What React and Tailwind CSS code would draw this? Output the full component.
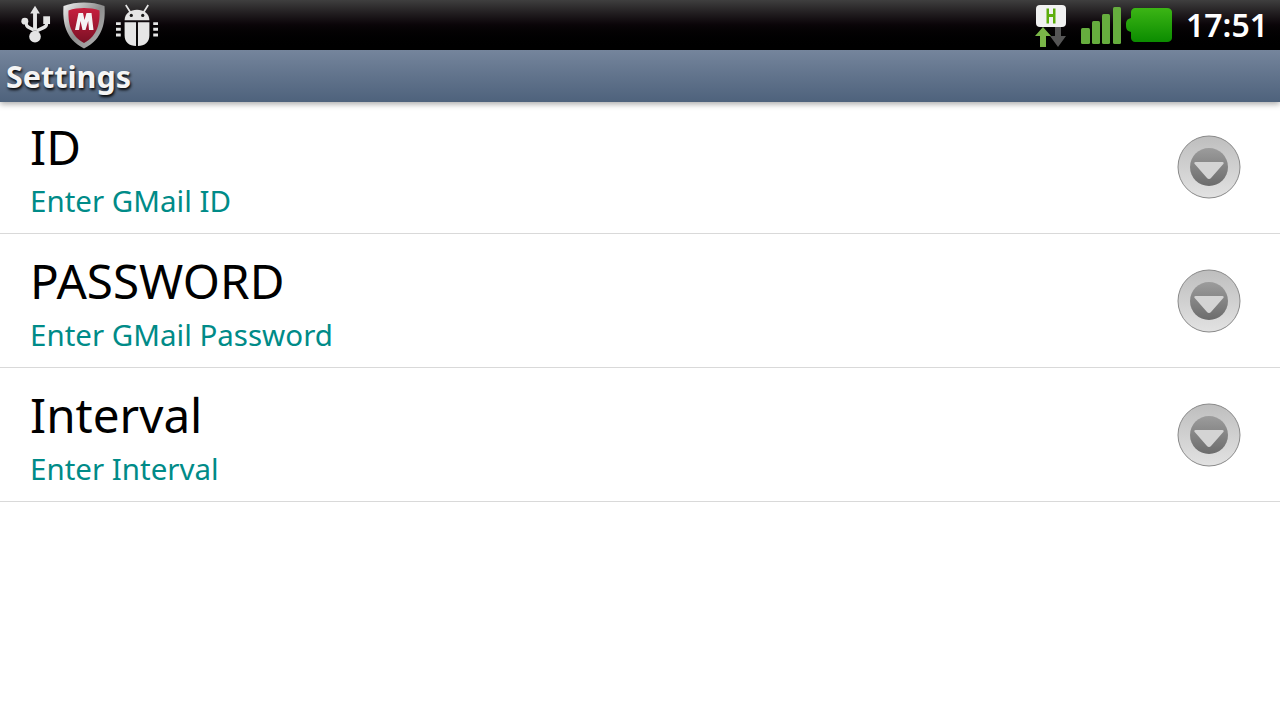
const ROWS = [
  { title: 'ID', hint: 'Enter GMail ID' },
  { title: 'PASSWORD', hint: 'Enter GMail Password' },
  { title: 'Interval', hint: 'Enter Interval' },
];

const UsbIcon = () => (
  <svg width="31" height="40" viewBox="0 0 32 40" fill="#e4e4e4">
    <path d="M15.5 0l5 8h-3v18h-4V8h-3z" />
    <circle cx="15.5" cy="32" r="6" />
    <circle cx="5" cy="16" r="3.6" />
    <rect x="24" y="11" width="7" height="8" />
    <path d="M5 16h3v2c0 2 1 2.500 3 3.500l3 1.500v4l-5-2.500C6 23 5 21.500 5 19zM26 16h3v3c0 2.500-1 4-4 5.500L17 28v-4l6.500-3c2-1 2.500-1.500 2.500-3z" />
  </svg>
);

const ShieldIcon = () => (
  <svg width="44" height="50" viewBox="0 0 44 50">
    <defs>
      <linearGradient id="rim" x1="0" y1="0" x2="1" y2="1">
        <stop offset="0" stopColor="#f2f2f2" />
        <stop offset="0.5" stopColor="#8d8d8d" />
        <stop offset="1" stopColor="#b8b8b8" />
      </linearGradient>
      <linearGradient id="red" x1="0" y1="0" x2="0" y2="1">
        <stop offset="0" stopColor="#c8213f" />
        <stop offset="1" stopColor="#7a0f24" />
      </linearGradient>
    </defs>
    <path d="M22 2.500c7 0 14 1 20.500 3.500 1 15-1 33-20.500 42.500C2.500 39 .5 21 1.500 6 8 3.500 15 2.500 22 2.500z" fill="url(#rim)" />
    <path d="M22 8c5 0 11 .7 15.500 2.500.5 12-1.500 25-15.500 32.500C8 35.500 6 22.500 6.500 10.500 11 8.700 17 8 22 8z" fill="url(#red)" />
    <path d="M13 30l3.500-17h4.500l1.500 7 2-7h5l2 17h-4.500l-.8-9-2.700 9h-3l-2-9-1.500 9z" fill="#f4f4f4" />
  </svg>
);

const BugIcon = () => (
  <svg width="42" height="44" viewBox="0 0 44 44" fill="#e6e6e6">
    <path d="M11 .5l5 8-1.500 1-5-8zM33 .5l-5 8 1.500 1 5-8z" />
    <path d="M9 17c0-7 6-11 13-11s13 4 13 11z" />
    <circle cx="16" cy="12" r="1.700" fill="#1a1a1a" />
    <circle cx="28" cy="12" r="1.700" fill="#1a1a1a" />
    <path d="M9 19h12v25c-7 0-12-4-12-11zM23 19h12v14c0 7-5 11-12 11z" />
    <path d="M0 19h5v3H0zM0 25h5v3H0zM0 31h5v3H0zM39 19h5v3h-5zM39 25h5v3h-5zM39 31h5v3h-5z" />
  </svg>
);

const DataIcon = () => (
  <svg width="34" height="48" viewBox="0 0 34 48">
    <rect x="1" y="4" width="30" height="22" rx="4" fill="#f1f1f1" />
    <path d="M11.500 7.500h2.500v5.500h4V7.500h2.500v15H18V16h-4v6.500h-2.500z" fill="#5cad0c" />
    <path d="M8 26l8 9h-5v11H5V35H0z" fill="#7ab648" />
    <path d="M20 26h6v9h5l-8 11-8-11h5z" fill="#555" />
  </svg>
);

const SignalIcon = () => (
  <svg width="40" height="37" viewBox="0 0 40 37" fill="#66ad3e">
    <rect x="0" y="21" width="9" height="16" rx="1.500" />
    <rect x="11" y="14" width="8" height="23" rx="1.500" />
    <rect x="21" y="7" width="8" height="30" rx="1.500" />
    <rect x="32" y="0" width="8" height="37" rx="1.500" />
  </svg>
);

const BatteryIcon = () => (
  <svg width="46" height="34" viewBox="0 0 46 34">
    <defs>
      <linearGradient id="batt" x1="0" y1="0" x2="0" y2="1">
        <stop offset="0" stopColor="#3cb515" />
        <stop offset="1" stopColor="#0b8c00" />
      </linearGradient>
    </defs>
    <path d="M0 17c0-4 1-6 5-7V4c0-2 2-4 4-4h32c3 0 5 2 5 4v26c0 2-2 4-5 4H9c-2 0-4-2-4-4v-6c-4-1-5-3-5-7z" fill="url(#batt)" />
  </svg>
);

const ExpandIcon = () => (
  <svg width="64" height="64" viewBox="0 0 64 64">
    <defs>
      <linearGradient id="outer" x1="0" y1="0" x2="0" y2="1">
        <stop offset="0" stopColor="#bebebe" />
        <stop offset="1" stopColor="#e2e2e2" />
      </linearGradient>
      <linearGradient id="inner" x1="0" y1="0" x2="0" y2="1">
        <stop offset="0" stopColor="#9c9c9c" />
        <stop offset="1" stopColor="#6c6c6c" />
      </linearGradient>
    </defs>
    <circle cx="32" cy="32" r="31" fill="url(#outer)" stroke="#8a8a8a" strokeWidth="1" />
    <circle cx="32" cy="32" r="19" fill="url(#inner)" />
    <path d="M18.500 27h27c1 0 1.500 1 1 1.800L34 43c-1 1.300-3 1.300-4 0L17.500 28.800c-.5-.8 0-1.800 1-1.800z" fill="#d4d4d4" />
  </svg>
);

function SettingRow({ title, hint }) {
  return (
    <div className="flex h-[134px] items-center justify-between border-b border-[#d9d9d9] pl-[30px] pr-[39.5px]">
      <div className="flex flex-col pt-[2px]">
        <div className="text-[47.6px] leading-[66px] text-black">{title}</div>
        <div className="pt-[1px] text-[29.5px] leading-[40px] text-[#008b88]">{hint}</div>
      </div>
      <ExpandIcon />
    </div>
  );
}

export default function App() {
  return (
    <div className="flex h-[720px] w-[1280px] flex-col overflow-hidden bg-white font-['Noto_Sans',sans-serif]">
      <div className="flex h-[50px] shrink-0 items-center justify-between bg-gradient-to-b from-[#3f3f3f] via-[#0a0508] via-50% to-black pl-[20px] pr-[12px]">
        <div className="flex items-center">
          <UsbIcon />
          <div className="ml-[11px]"><ShieldIcon /></div>
          <div className="ml-[10px]"><BugIcon /></div>
        </div>
        <div className="flex items-center">
          <DataIcon />
          <div className="ml-[12px]"><SignalIcon /></div>
          <div className="ml-[5px]"><BatteryIcon /></div>
          <div className="ml-[14px] text-[32px] font-semibold leading-[50px] text-white">17:51</div>
        </div>
      </div>
      <div className="relative z-10 flex h-[52px] shrink-0 items-center bg-gradient-to-b from-[#75859c] to-[#4e627c] pl-[6px] shadow-[0_2px_6px_rgba(0,0,0,0.35)]">
        <div className="text-[30.5px] font-bold leading-[50px] text-[#f4f4f4] [text-shadow:1px_2px_3px_#000]">Settings</div>
      </div>
      <div className="-mt-[2px] flex flex-col">
        {ROWS.map((row) => (
          <SettingRow key={row.title} title={row.title} hint={row.hint} />
        ))}
      </div>
    </div>
  );
}
